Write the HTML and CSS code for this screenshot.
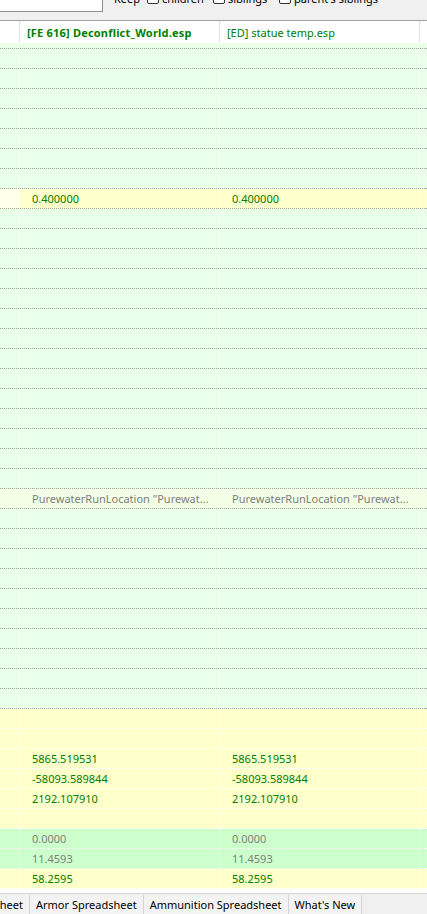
FILE: index.html
```html
<!DOCTYPE html>
<html>
<head>
<meta charset="utf-8">
<link rel="stylesheet" href="styles.css">
</head>
<body>
<div class="top">
  <div class="search"></div>
  <div class="keep">
    <span class="keep-lbl">Keep</span>
    <span class="opt"><span class="box"></span>children</span>
    <span class="opt"><span class="box"></span>siblings</span>
    <span class="opt"><span class="box"></span>parent's siblings</span>
  </div>
</div>
<div class="hdr">
  <div class="h0"></div>
  <div class="h1 bold">[FE 616] Deconflict_World.esp</div>
  <div class="h1">[ED] statue temp.esp</div>
  <div class="h3"></div>
</div>
<div class="grid">
  <div class="row first"><i class="c0"></i><i class="c1"></i><i class="c1"></i><i class="c3"></i></div>
  <div class="row"><i class="c0"></i><i class="c1"></i><i class="c1"></i><i class="c3"></i></div>
  <div class="row"><i class="c0"></i><i class="c1"></i><i class="c1"></i><i class="c3"></i></div>
  <div class="row"><i class="c0"></i><i class="c1"></i><i class="c1"></i><i class="c3"></i></div>
  <div class="row"><i class="c0"></i><i class="c1"></i><i class="c1"></i><i class="c3"></i></div>
  <div class="row"><i class="c0"></i><i class="c1"></i><i class="c1"></i><i class="c3"></i></div>
  <div class="row"><i class="c0"></i><i class="c1"></i><i class="c1"></i><i class="c3"></i></div>
  <div class="row"><i class="c0"></i><i class="c1"></i><i class="c1"></i><i class="c3"></i></div>
  <div class="row y"><i class="c0 pale"></i><i class="c1 tg">0.400000</i><i class="c1 tg">0.400000</i><i class="c3"></i></div>
  <div class="row"><i class="c0"></i><i class="c1"></i><i class="c1"></i><i class="c3"></i></div>
  <div class="row"><i class="c0"></i><i class="c1"></i><i class="c1"></i><i class="c3"></i></div>
  <div class="row"><i class="c0"></i><i class="c1"></i><i class="c1"></i><i class="c3"></i></div>
  <div class="row"><i class="c0"></i><i class="c1"></i><i class="c1"></i><i class="c3"></i></div>
  <div class="row"><i class="c0"></i><i class="c1"></i><i class="c1"></i><i class="c3"></i></div>
  <div class="row"><i class="c0"></i><i class="c1"></i><i class="c1"></i><i class="c3"></i></div>
  <div class="row"><i class="c0"></i><i class="c1"></i><i class="c1"></i><i class="c3"></i></div>
  <div class="row"><i class="c0"></i><i class="c1"></i><i class="c1"></i><i class="c3"></i></div>
  <div class="row"><i class="c0"></i><i class="c1"></i><i class="c1"></i><i class="c3"></i></div>
  <div class="row"><i class="c0"></i><i class="c1"></i><i class="c1"></i><i class="c3"></i></div>
  <div class="row"><i class="c0"></i><i class="c1"></i><i class="c1"></i><i class="c3"></i></div>
  <div class="row"><i class="c0"></i><i class="c1"></i><i class="c1"></i><i class="c3"></i></div>
  <div class="row"><i class="c0"></i><i class="c1"></i><i class="c1"></i><i class="c3"></i></div>
  <div class="row"><i class="c0"></i><i class="c1"></i><i class="c1"></i><i class="c3"></i></div>
  <div class="row pw"><i class="c0"></i><i class="c1 tgr">PurewaterRunLocation "Purewat...</i><i class="c1 tgr">PurewaterRunLocation "Purewat...</i><i class="c3"></i></div>
  <div class="row"><i class="c0"></i><i class="c1"></i><i class="c1"></i><i class="c3"></i></div>
  <div class="row"><i class="c0"></i><i class="c1"></i><i class="c1"></i><i class="c3"></i></div>
  <div class="row"><i class="c0"></i><i class="c1"></i><i class="c1"></i><i class="c3"></i></div>
  <div class="row"><i class="c0"></i><i class="c1"></i><i class="c1"></i><i class="c3"></i></div>
  <div class="row"><i class="c0"></i><i class="c1"></i><i class="c1"></i><i class="c3"></i></div>
  <div class="row"><i class="c0"></i><i class="c1"></i><i class="c1"></i><i class="c3"></i></div>
  <div class="row"><i class="c0"></i><i class="c1"></i><i class="c1"></i><i class="c3"></i></div>
  <div class="row"><i class="c0"></i><i class="c1"></i><i class="c1"></i><i class="c3"></i></div>
  <div class="row"><i class="c0"></i><i class="c1"></i><i class="c1"></i><i class="c3"></i></div>
  <div class="row"><i class="c0"></i><i class="c1"></i><i class="c1"></i><i class="c3"></i></div>
  <div class="row y w"><i class="c0"></i><i class="c1"></i><i class="c1"></i><i class="c3"></i></div>
  <div class="row y w"><i class="c0"></i><i class="c1"></i><i class="c1"></i><i class="c3"></i></div>
  <div class="row y w"><i class="c0"></i><i class="c1 tg">5865.519531</i><i class="c1 tg">5865.519531</i><i class="c3"></i></div>
  <div class="row y w"><i class="c0"></i><i class="c1 tg">-58093.589844</i><i class="c1 tg">-58093.589844</i><i class="c3"></i></div>
  <div class="row y w"><i class="c0"></i><i class="c1 tg">2192.107910</i><i class="c1 tg">2192.107910</i><i class="c3"></i></div>
  <div class="row y w"><i class="c0"></i><i class="c1"></i><i class="c1"></i><i class="c3"></i></div>
  <div class="row g2 w"><i class="c0"></i><i class="c1 tgr">0.0000</i><i class="c1 tgr">0.0000</i><i class="c3"></i></div>
  <div class="row g2 w"><i class="c0"></i><i class="c1 tgr">11.4593</i><i class="c1 tgr">11.4593</i><i class="c3"></i></div>
  <div class="row y w"><i class="c0"></i><i class="c1 tg">58.2595</i><i class="c1 tg">58.2595</i><i class="c3"></i></div>
</div>
<div class="tabs">
  <div class="tab cut"><span>Weapon Spreadsheet</span></div>
  <div class="tab">Armor Spreadsheet</div>
  <div class="tab">Ammunition Spreadsheet</div>
  <div class="tab">What's New</div>
</div>
</body>
</html>
```
FILE: styles.css
```css
html, body {
  margin: 0;
  padding: 0;
}
body {
  width: 427px;
  height: 914px;
  overflow: hidden;
  background: #ffffff;
  font-family: "Noto Sans", "DejaVu Sans", sans-serif;
  font-size: 11px;
  color: #000;
}
i { font-style: normal; }

/* top filter bar */
.top {
  height: 20px;
  background: #f0f0f0;
  border-bottom: 1px solid #a0a0a0;
  display: flex;
  align-items: flex-start;
  overflow: hidden;
}
.search {
  width: 102px;
  height: 11px;
  flex: none;
  background: #ffffff;
  border-right: 1px solid #8f8f8f;
  border-bottom: 1px solid #8f8f8f;
}
.keep {
  display: flex;
  align-items: center;
  height: 16px;
  margin-top: -10px;
  margin-left: 11px;
  white-space: nowrap;
}
.keep-lbl {
  width: 33px;
  flex: none;
}
.opt {
  width: 66px;
  flex: none;
  display: flex;
  align-items: center;
  gap: 3px;
}
.box {
  width: 12px;
  height: 12px;
  box-sizing: border-box;
  border: 1px solid #333333;
  border-radius: 2px;
  background: #ffffff;
  flex: none;
}

/* header */
.hdr {
  display: flex;
  height: 22px;
  background: #ffffff;
}
.h0 {
  width: 20px;
  flex: none;
  box-sizing: border-box;
  border-right: 1px solid #e3e3e3;
}
.h1 {
  width: 200px;
  flex: none;
  box-sizing: border-box;
  border-right: 1px solid #e3e3e3;
  padding-left: 7px;
  line-height: 23px;
  color: #008000;
  white-space: nowrap;
  overflow: hidden;
}
.h1.bold {
  font-weight: bold;
  letter-spacing: 0.2px;
}
.h3 { flex: 1; }

/* grid rows */
.grid {
  display: flex;
  flex-direction: column;
}
.row {
  display: flex;
  height: 20px;
  box-sizing: border-box;
  border-bottom: 1px dotted #a0a0a0;
  background: #eaffea;
}
.row.first { height: 6px; }
.row.y { background: #ffffcc; }
.row.g2 { background: #ccffcc; }
.row.pw { background: #f2ffe6; }
.row.w { border-bottom-color: #ffffff; }

.c0 {
  width: 20px;
  flex: none;
  box-sizing: border-box;
  border-right: 1px dotted #ffffff;
}
.c0.pale { background: #ffffec; }
.c1 {
  width: 200px;
  flex: none;
  box-sizing: border-box;
  border-right: 1px dotted #ffffff;
  padding-left: 12px;
  line-height: 19px;
  white-space: nowrap;
  overflow: hidden;
}
.c3 { flex: 1; }
.tg { color: #008000; }
.tgr { color: #808080; }

/* bottom tabs */
.tabs {
  display: flex;
  margin-top: 4px;
  height: 21px;
  box-sizing: border-box;
  border-top: 1px solid #d4d4d4;
  background: #f0f0f0;
  white-space: nowrap;
}
.tab {
  flex: none;
  box-sizing: border-box;
  height: 20px;
  margin-top: 1px;
  padding: 0 6px;
  line-height: 20px;
  border-right: 1px solid #d4d4d4;
  background: #f3f3f3;
}
.tab.cut {
  width: 30px;
  display: flex;
  justify-content: flex-end;
  overflow: hidden;
}
.tab.cut span { flex: none; }
```
